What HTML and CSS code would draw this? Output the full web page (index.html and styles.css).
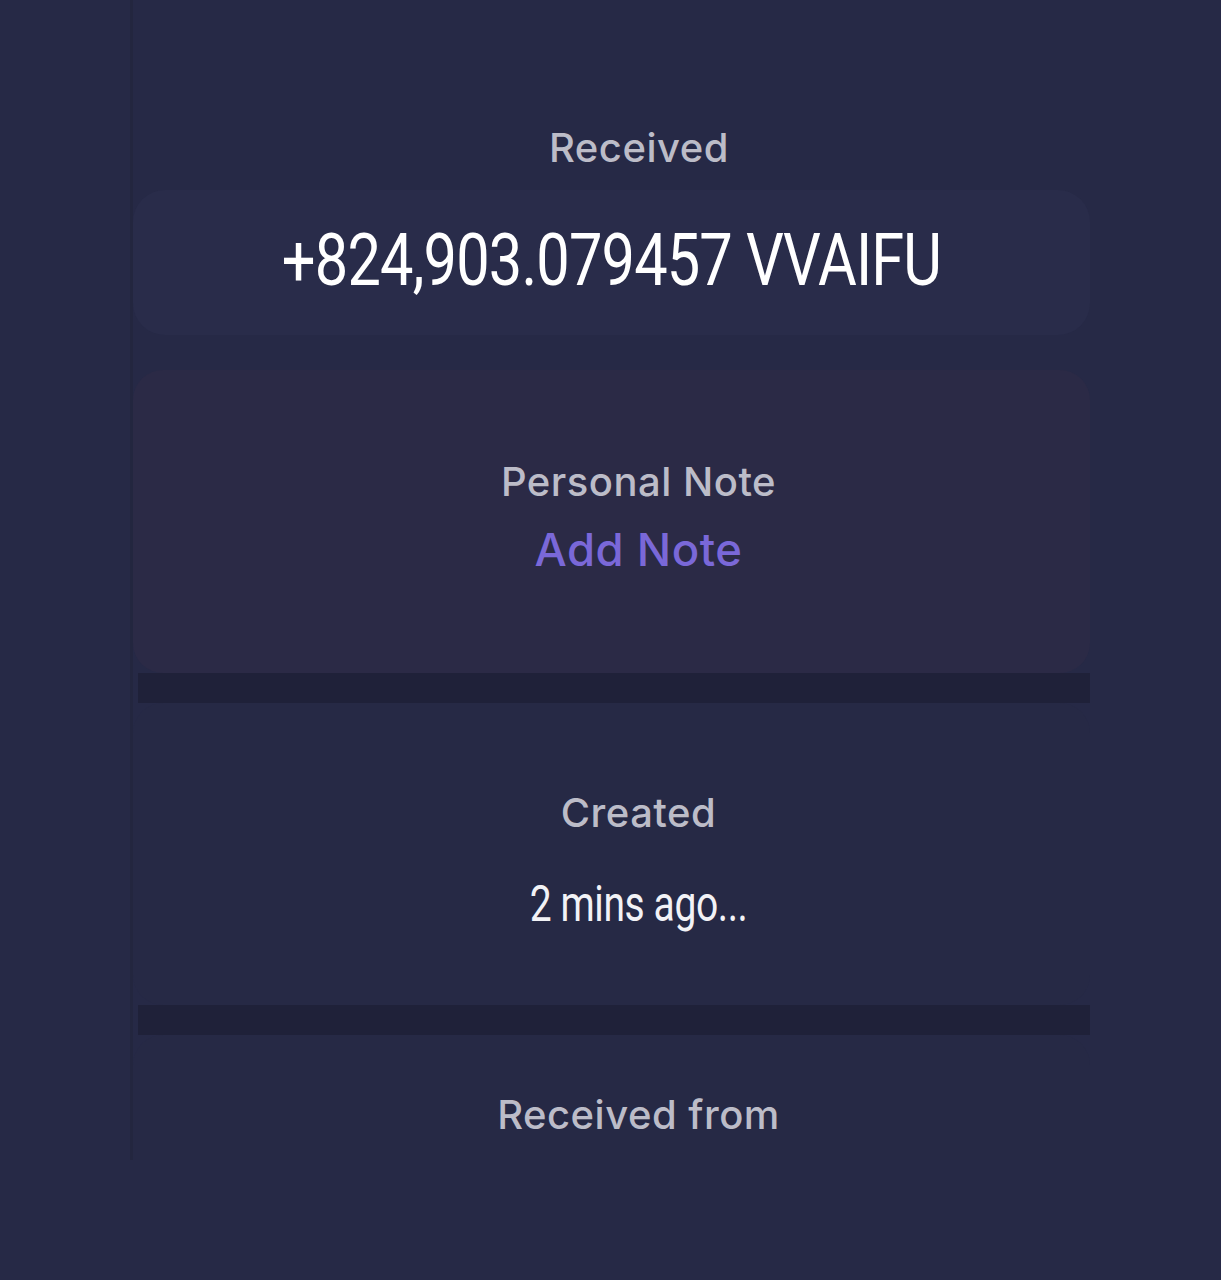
FILE: index.html
```html
<!DOCTYPE html>
<html lang="en">
<head>
<meta charset="utf-8">
<title>Transaction</title>
<link rel="stylesheet" href="styles.css">
</head>
<body>
<main class="panel">
  <div class="head">
    <span class="label">Received</span>
  </div>
  <section class="card amount-card">
    <span class="amount">+824,903.079457 VVAIFU</span>
  </section>
  <section class="card note-card">
    <span class="label">Personal Note</span>
    <span class="link">Add Note</span>
  </section>
  <div class="band"></div>
  <section class="card created-card">
    <span class="label">Created</span>
    <span class="value">2 mins ago...</span>
  </section>
  <div class="band"></div>
  <section class="card from-card">
    <span class="label">Received from</span>
  </section>
</main>
</body>
</html>
```
FILE: styles.css
```css
html, body {
  margin: 0;
  padding: 0;
}
body {
  background: #262946;
  min-height: 1280px;
  font-family: Inter, "Noto Sans", sans-serif;
}
.panel {
  margin-left: 130px;
  width: 960px;
  padding-top: 100px;
  display: flex;
  flex-direction: column;
  border-left: 3px solid #23263f;
  box-sizing: border-box;
}
.head {
  height: 90px;
  display: flex;
  justify-content: center;
  align-items: center;
  padding-left: 55px;
  padding-top: 6px;
  box-sizing: border-box;
}
.label {
  color: #bcbcc8;
  font-size: 40px;
  font-weight: 500;
  letter-spacing: 0.5px;
  line-height: 1;
}
.card {
  background: #292c4a;
  border-radius: 30px;
  display: flex;
  flex-direction: column;
  align-items: center;
  padding-left: 54px;
  box-sizing: border-box;
}
.amount-card {
  height: 145px;
  justify-content: center;
  margin-bottom: 35px;
  border-radius: 32px;
}
.amount {
  color: #ffffff;
  font-family: Roboto, "Liberation Sans", sans-serif;
  font-size: 73px;
  line-height: 1;
  display: inline-block;
  transform: scaleX(0.815);
  letter-spacing: -1px;
  white-space: nowrap;
  margin-right: 54px;
  margin-bottom: 4px;
}
.note-card {
  height: 303px;
  background: #2b2a46;
  padding-top: 92px;
}
.link {
  color: #7a68d8;
  font-size: 45.5px;
  font-weight: 500;
  line-height: 1;
  margin-top: 25px;
  letter-spacing: 0.5px;
}
.band {
  height: 30px;
  background: #1f2139;
  margin-left: 5px;
}
.created-card {
  height: 302px;
  background: #262945;
  padding-top: 90px;
}
.value {
  color: #f2f2f6;
  font-family: Roboto, "Liberation Sans", sans-serif;
  font-size: 50px;
  line-height: 1;
  margin-top: 46px;
  display: inline-block;
  transform: scaleX(0.78);
  letter-spacing: -0.5px;
}
.from-card {
  height: 125px;
  background: #262945;
  padding-top: 60px;
  border-radius: 30px 30px 0 0;
}
```
